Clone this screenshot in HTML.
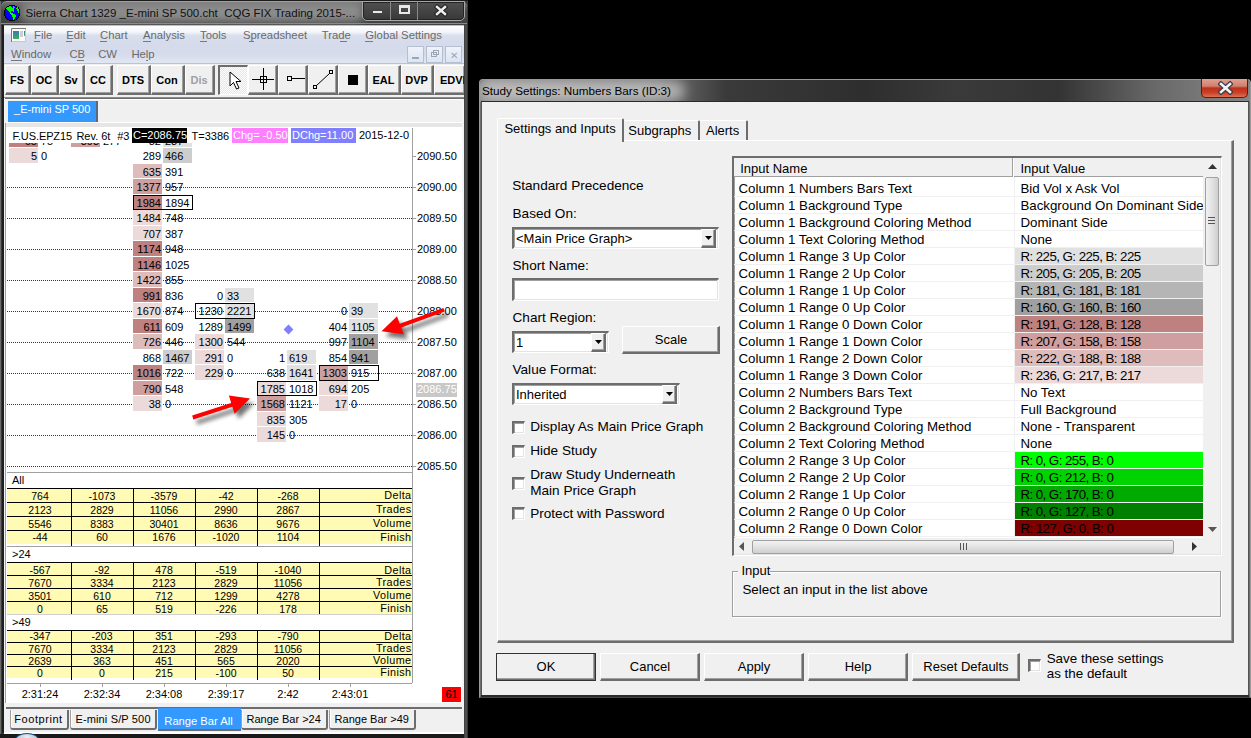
<!DOCTYPE html>
<html><head><meta charset="utf-8"><style>
html,body{margin:0;padding:0}
body{width:1251px;height:738px;background:#000;position:relative;overflow:hidden;font-family:"Liberation Sans",sans-serif;color:#000}
div{position:absolute;box-sizing:border-box}
.t{white-space:pre}
svg{position:absolute}
</style></head><body>

<div style="left:0px;top:0px;width:468px;height:738px;background:#3a3a3a"></div>
<div style="left:0px;top:0px;width:1px;height:738px;background:#6a6a6a"></div>
<div style="left:2px;top:25px;width:2px;height:708px;background:#1e1e1e"></div>
<div style="left:1px;top:1px;width:466px;height:24px;background:linear-gradient(#707070,#4a4a4a 40%,#404040);border-top:1px solid #9a9a9a;border-radius:6px 6px 0 0"></div>
<div style="left:20px;top:4px;width:345px;height:18px;background:rgba(200,200,200,0.55);filter:blur(5px);border-radius:9px"></div>
<svg style="left:4px;top:5px" width="16" height="16" viewBox="0 0 16 16" shape-rendering="crispEdges"><rect x="5" y="0" width="6" height="1" fill="#000"/><rect x="3" y="1" width="2" height="1" fill="#000"/><rect x="5" y="1" width="2" height="1" fill="#00ff00"/><rect x="7" y="1" width="2" height="1" fill="#0000ff"/><rect x="9" y="1" width="1" height="1" fill="#00ff00"/><rect x="10" y="1" width="1" height="1" fill="#0000ff"/><rect x="11" y="1" width="2" height="1" fill="#000"/><rect x="2" y="2" width="1" height="1" fill="#000"/><rect x="3" y="2" width="5" height="1" fill="#00ff00"/><rect x="8" y="2" width="1" height="1" fill="#0000ff"/><rect x="9" y="2" width="2" height="1" fill="#00ff00"/><rect x="11" y="2" width="2" height="1" fill="#0000ff"/><rect x="13" y="2" width="1" height="1" fill="#00ff00"/><rect x="14" y="2" width="1" height="1" fill="#000"/><rect x="1" y="3" width="1" height="1" fill="#000"/><rect x="2" y="3" width="8" height="1" fill="#00ff00"/><rect x="10" y="3" width="2" height="1" fill="#0000ff"/><rect x="12" y="3" width="2" height="1" fill="#00ff00"/><rect x="14" y="3" width="1" height="1" fill="#000"/><rect x="1" y="4" width="1" height="1" fill="#000"/><rect x="2" y="4" width="1" height="1" fill="#0000ff"/><rect x="3" y="4" width="7" height="1" fill="#00ff00"/><rect x="10" y="4" width="3" height="1" fill="#0000ff"/><rect x="13" y="4" width="2" height="1" fill="#00ff00"/><rect x="15" y="4" width="1" height="1" fill="#000"/><rect x="0" y="5" width="1" height="1" fill="#000"/><rect x="1" y="5" width="3" height="1" fill="#0000ff"/><rect x="4" y="5" width="6" height="1" fill="#00ff00"/><rect x="10" y="5" width="3" height="1" fill="#0000ff"/><rect x="13" y="5" width="2" height="1" fill="#00ff00"/><rect x="15" y="5" width="1" height="1" fill="#000"/><rect x="0" y="6" width="1" height="1" fill="#000"/><rect x="1" y="6" width="4" height="1" fill="#0000ff"/><rect x="5" y="6" width="2" height="1" fill="#00ff00"/><rect x="7" y="6" width="2" height="1" fill="#0000ff"/><rect x="9" y="6" width="1" height="1" fill="#00ff00"/><rect x="10" y="6" width="4" height="1" fill="#0000ff"/><rect x="14" y="6" width="1" height="1" fill="#00ff00"/><rect x="15" y="6" width="1" height="1" fill="#000"/><rect x="0" y="7" width="1" height="1" fill="#000"/><rect x="1" y="7" width="5" height="1" fill="#0000ff"/><rect x="6" y="7" width="1" height="1" fill="#00ff00"/><rect x="7" y="7" width="7" height="1" fill="#0000ff"/><rect x="14" y="7" width="1" height="1" fill="#00ff00"/><rect x="15" y="7" width="1" height="1" fill="#000"/><rect x="0" y="8" width="1" height="1" fill="#000"/><rect x="1" y="8" width="5" height="1" fill="#0000ff"/><rect x="6" y="8" width="3" height="1" fill="#00ff00"/><rect x="9" y="8" width="6" height="1" fill="#0000ff"/><rect x="15" y="8" width="1" height="1" fill="#000"/><rect x="0" y="9" width="1" height="1" fill="#000"/><rect x="1" y="9" width="6" height="1" fill="#0000ff"/><rect x="7" y="9" width="4" height="1" fill="#00ff00"/><rect x="11" y="9" width="4" height="1" fill="#0000ff"/><rect x="15" y="9" width="1" height="1" fill="#000"/><rect x="0" y="10" width="1" height="1" fill="#000"/><rect x="1" y="10" width="7" height="1" fill="#0000ff"/><rect x="8" y="10" width="4" height="1" fill="#00ff00"/><rect x="12" y="10" width="3" height="1" fill="#0000ff"/><rect x="15" y="10" width="1" height="1" fill="#000"/><rect x="1" y="11" width="1" height="1" fill="#000"/><rect x="2" y="11" width="6" height="1" fill="#0000ff"/><rect x="8" y="11" width="4" height="1" fill="#00ff00"/><rect x="12" y="11" width="2" height="1" fill="#0000ff"/><rect x="14" y="11" width="1" height="1" fill="#000"/><rect x="1" y="12" width="1" height="1" fill="#000"/><rect x="2" y="12" width="7" height="1" fill="#0000ff"/><rect x="9" y="12" width="2" height="1" fill="#00ff00"/><rect x="11" y="12" width="3" height="1" fill="#0000ff"/><rect x="14" y="12" width="1" height="1" fill="#000"/><rect x="2" y="13" width="1" height="1" fill="#000"/><rect x="3" y="13" width="6" height="1" fill="#0000ff"/><rect x="9" y="13" width="2" height="1" fill="#00ff00"/><rect x="11" y="13" width="2" height="1" fill="#0000ff"/><rect x="13" y="13" width="1" height="1" fill="#000"/><rect x="3" y="14" width="2" height="1" fill="#000"/><rect x="5" y="14" width="4" height="1" fill="#0000ff"/><rect x="9" y="14" width="1" height="1" fill="#00ff00"/><rect x="10" y="14" width="2" height="1" fill="#0000ff"/><rect x="12" y="14" width="1" height="1" fill="#000"/><rect x="5" y="15" width="6" height="1" fill="#000"/></svg>
<div class="t " style="left:25.6px;top:7.87px;font-size:11.5px;line-height:11.5px;color:#111">Sierra Chart 1329 _E-mini SP 500.cht  CQG FIX Trading 2015-...</div>
<div style="left:1px;top:23px;width:466px;height:1px;background:#8a8a8a"></div>
<div style="left:0px;top:0px;width:468px;height:1px;background:#1a1a1a"></div>
<div style="left:362px;top:1px;width:103px;height:20px;border:1px solid #a8a8a8;border-radius:0 0 5px 5px;background:linear-gradient(#505050,#383838);box-shadow:inset 0 0 0 1px #222"></div>
<div style="left:390px;top:1px;width:1px;height:19px;background:#8a8a8a"></div>
<div style="left:417px;top:1px;width:1px;height:19px;background:#8a8a8a"></div>
<div style="left:372px;top:10px;width:11px;height:4px;background:#e8e8e8;border:1px solid #444"></div>
<div style="left:399px;top:5px;width:11px;height:9px;border:2px solid #e8e8e8;border-top-width:3px"></div>
<svg style="left:434px;top:4px" width="14" height="13" viewBox="0 0 14 13"><path d="M3 3 L11 10 M11 3 L3 10" stroke="#222" stroke-width="4.4" stroke-linecap="square"/><path d="M3 3 L11 10 M11 3 L3 10" stroke="#f0f0f0" stroke-width="2.4" stroke-linecap="square"/></svg>
<div style="left:4px;top:25px;width:460px;height:39px;background:linear-gradient(#ffffff 0,#f3f5fa 18%,#d9dfed 27%,#d5dbea 45%,#d5dbea 75%,#dde2f0 88%,#e1e6f3 97%,#b9c2d6 97.5%)"></div>
<div style="left:4px;top:25px;width:460px;height:1px;background:#b9c1cc"></div>
<svg style="left:11px;top:28px" width="15" height="14" viewBox="0 0 15 14">
<defs><linearGradient id="bg1" x1="0" y1="0" x2="0" y2="1"><stop offset="0" stop-color="#4a70c0"/><stop offset="0.35" stop-color="#3a8a9a"/><stop offset="1" stop-color="#40b050"/></linearGradient></defs>
<rect x="0" y="0" width="15" height="14" fill="#fbfbfb"/>
<path d="M0.5 14 V0.5 H15" stroke="#7a7a7a" fill="none"/>
<path d="M14.5 1 V13.5 H1" stroke="#c4c8d2" fill="none"/>
<rect x="2" y="3" width="6" height="8" fill="url(#bg1)"/>
<rect x="9" y="3" width="3" height="6" fill="#cfcfcf"/>
<rect x="13" y="3" width="1" height="5" fill="url(#bg1)"/>
</svg>
<div class="t " style="left:34.1px;top:30.33px;font-size:11.3px;line-height:11.3px;color:#6a6a6a">File</div>
<div class="t " style="left:66.2px;top:30.33px;font-size:11.3px;line-height:11.3px;color:#6a6a6a">Edit</div>
<div class="t " style="left:100.1px;top:30.33px;font-size:11.3px;line-height:11.3px;color:#6a6a6a">Chart</div>
<div class="t " style="left:142.9px;top:30.33px;font-size:11.3px;line-height:11.3px;color:#6a6a6a">Analysis</div>
<div class="t " style="left:200.1px;top:30.33px;font-size:11.3px;line-height:11.3px;color:#6a6a6a">Tools</div>
<div class="t " style="left:243px;top:30.33px;font-size:11.3px;line-height:11.3px;color:#6a6a6a">Spreadsheet</div>
<div class="t " style="left:321.7px;top:30.33px;font-size:11.3px;line-height:11.3px;color:#6a6a6a">Trade</div>
<div class="t " style="left:365.3px;top:30.33px;font-size:11.3px;line-height:11.3px;color:#6a6a6a">Global Settings</div>
<div class="t " style="left:11.1px;top:48.93px;font-size:11.3px;line-height:11.3px;color:#6a6a6a">Window</div>
<div class="t " style="left:69.4px;top:48.93px;font-size:11.3px;line-height:11.3px;color:#6a6a6a">CB</div>
<div class="t " style="left:98.2px;top:48.93px;font-size:11.3px;line-height:11.3px;color:#6a6a6a">CW</div>
<div class="t " style="left:131.4px;top:48.93px;font-size:11.3px;line-height:11.3px;color:#6a6a6a">Help</div>
<div style="left:34.3px;top:41px;width:5.300000000000004px;height:1px;background:#7a7a7a"></div>
<div style="left:66.2px;top:41px;width:5.700000000000003px;height:1px;background:#7a7a7a"></div>
<div style="left:100.4px;top:41px;width:7.0px;height:1px;background:#7a7a7a"></div>
<div style="left:143px;top:41px;width:7.599999999999994px;height:1px;background:#7a7a7a"></div>
<div style="left:200px;top:41px;width:7.199999999999989px;height:1px;background:#7a7a7a"></div>
<div style="left:249.2px;top:41px;width:4.800000000000011px;height:1px;background:#7a7a7a"></div>
<div style="left:340.3px;top:41px;width:6.699999999999989px;height:1px;background:#7a7a7a"></div>
<div style="left:365.3px;top:41px;width:7.699999999999989px;height:1px;background:#7a7a7a"></div>
<div style="left:11.3px;top:60px;width:10.399999999999999px;height:1px;background:#7a7a7a"></div>
<div style="left:77.4px;top:60px;width:6.3999999999999915px;height:1px;background:#7a7a7a"></div>
<div style="left:145.8px;top:60px;width:2.5px;height:1px;background:#7a7a7a"></div>
<div style="left:407px;top:46px;width:17px;height:17px;background:linear-gradient(#eef3fb,#dde5f2);border:1px solid #b4c0d2"></div>
<div style="left:426px;top:46px;width:17px;height:17px;background:linear-gradient(#eef3fb,#dde5f2);border:1px solid #b4c0d2"></div>
<div style="left:445px;top:46px;width:17px;height:17px;background:linear-gradient(#eef3fb,#dde5f2);border:1px solid #b4c0d2"></div>
<div style="left:412px;top:57px;width:7px;height:2px;background:#9aa6b8"></div>
<div style="left:431px;top:52px;width:6px;height:5px;border:1px solid #9aa6b8"></div>
<div style="left:433px;top:50px;width:6px;height:5px;border:1px solid #9aa6b8"></div>
<div class="t " style="left:453.5px;top:50.53px;font-size:10px;line-height:10px;color:#9aa6b8;transform:translateX(-50%)">✕</div>
<div style="left:4px;top:64px;width:460px;height:34px;background:#f0f0f0"></div>
<div style="left:5px;top:65px;width:26px;height:30px;background:#f0f0f0;border-left:1px solid #fff;border-top:1px solid #fff;border-right:2px solid #6d6d6d;border-bottom:2px solid #6d6d6d;box-shadow:inset -1px -1px 0 #a0a0a0"></div>
<div class="t " style="left:-3.0px;width:40px;top:74.69px;font-size:11px;line-height:11px;text-align:center;font-weight:bold;">FS</div>
<div style="left:31px;top:65px;width:28px;height:30px;background:#f0f0f0;border-left:1px solid #fff;border-top:1px solid #fff;border-right:2px solid #6d6d6d;border-bottom:2px solid #6d6d6d;box-shadow:inset -1px -1px 0 #a0a0a0"></div>
<div class="t " style="left:24.0px;width:40px;top:74.69px;font-size:11px;line-height:11px;text-align:center;font-weight:bold;">OC</div>
<div style="left:59px;top:65px;width:26px;height:30px;background:#f0f0f0;border-left:1px solid #fff;border-top:1px solid #fff;border-right:2px solid #6d6d6d;border-bottom:2px solid #6d6d6d;box-shadow:inset -1px -1px 0 #a0a0a0"></div>
<div class="t " style="left:51.0px;width:40px;top:74.69px;font-size:11px;line-height:11px;text-align:center;font-weight:bold;">Sv</div>
<div style="left:85px;top:65px;width:28px;height:30px;background:#f0f0f0;border-left:1px solid #fff;border-top:1px solid #fff;border-right:2px solid #6d6d6d;border-bottom:2px solid #6d6d6d;box-shadow:inset -1px -1px 0 #a0a0a0"></div>
<div class="t " style="left:78.0px;width:40px;top:74.69px;font-size:11px;line-height:11px;text-align:center;font-weight:bold;">CC</div>
<div style="left:117px;top:65px;width:34px;height:30px;background:#f0f0f0;border-left:1px solid #fff;border-top:1px solid #fff;border-right:2px solid #6d6d6d;border-bottom:2px solid #6d6d6d;box-shadow:inset -1px -1px 0 #a0a0a0"></div>
<div class="t " style="left:113.0px;width:40px;top:74.69px;font-size:11px;line-height:11px;text-align:center;font-weight:bold;">DTS</div>
<div style="left:151px;top:65px;width:34px;height:30px;background:#f0f0f0;border-left:1px solid #fff;border-top:1px solid #fff;border-right:2px solid #6d6d6d;border-bottom:2px solid #6d6d6d;box-shadow:inset -1px -1px 0 #a0a0a0"></div>
<div class="t " style="left:147.0px;width:40px;top:74.69px;font-size:11px;line-height:11px;text-align:center;font-weight:bold;">Con</div>
<div style="left:185px;top:65px;width:30px;height:30px;background:#f0f0f0;border-left:1px solid #fff;border-top:1px solid #fff;border-right:2px solid #6d6d6d;border-bottom:2px solid #6d6d6d;box-shadow:inset -1px -1px 0 #a0a0a0"></div>
<div class="t " style="left:179.0px;width:40px;top:74.69px;font-size:11px;line-height:11px;text-align:center;font-weight:bold;color:#a0a0a0">Dis</div>
<div style="left:218px;top:65px;width:30px;height:30px;background:repeating-conic-gradient(#fdfdfd 0 25%,#e6e6e6 0 50%) 0 0/2px 2px;border-left:2px solid #6d6d6d;border-top:2px solid #6d6d6d;border-right:1px solid #fff;border-bottom:1px solid #fff"></div>
<div style="left:248px;top:65px;width:30px;height:30px;background:#f0f0f0;border-left:1px solid #fff;border-top:1px solid #fff;border-right:2px solid #6d6d6d;border-bottom:2px solid #6d6d6d;box-shadow:inset -1px -1px 0 #a0a0a0"></div>
<div style="left:278px;top:65px;width:30px;height:30px;background:#f0f0f0;border-left:1px solid #fff;border-top:1px solid #fff;border-right:2px solid #6d6d6d;border-bottom:2px solid #6d6d6d;box-shadow:inset -1px -1px 0 #a0a0a0"></div>
<div style="left:308px;top:65px;width:30px;height:30px;background:#f0f0f0;border-left:1px solid #fff;border-top:1px solid #fff;border-right:2px solid #6d6d6d;border-bottom:2px solid #6d6d6d;box-shadow:inset -1px -1px 0 #a0a0a0"></div>
<div style="left:338px;top:65px;width:30px;height:30px;background:#f0f0f0;border-left:1px solid #fff;border-top:1px solid #fff;border-right:2px solid #6d6d6d;border-bottom:2px solid #6d6d6d;box-shadow:inset -1px -1px 0 #a0a0a0"></div>
<div style="left:368px;top:65px;width:33px;height:30px;background:#f0f0f0;border-left:1px solid #fff;border-top:1px solid #fff;border-right:2px solid #6d6d6d;border-bottom:2px solid #6d6d6d;box-shadow:inset -1px -1px 0 #a0a0a0"></div>
<div style="left:401px;top:65px;width:33px;height:30px;background:#f0f0f0;border-left:1px solid #fff;border-top:1px solid #fff;border-right:2px solid #6d6d6d;border-bottom:2px solid #6d6d6d;box-shadow:inset -1px -1px 0 #a0a0a0"></div>
<div style="left:434px;top:65px;width:32px;height:30px;background:#f0f0f0;border-left:1px solid #fff;border-top:1px solid #fff;border-right:2px solid #6d6d6d;border-bottom:2px solid #6d6d6d;box-shadow:inset -1px -1px 0 #a0a0a0"></div>
<div class="t " style="left:363.5px;width:40px;top:74.69px;font-size:11px;line-height:11px;text-align:center;font-weight:bold">EAL</div>
<div class="t " style="left:396.5px;width:40px;top:74.69px;font-size:11px;line-height:11px;text-align:center;font-weight:bold">DVP</div>
<div class="t " style="left:440px;top:74.69px;font-size:11px;line-height:11px;font-weight:bold">EDVP</div>
<svg style="left:229px;top:71px" width="14" height="20" viewBox="0 0 14 20">
<path d="M1 1 L1 15 L4.5 11.5 L7.5 18 L10 17 L7 10.5 L12 10.5 Z" fill="#fff" stroke="#000" stroke-width="1"/>
</svg>
<svg style="left:250px;top:66px" width="26" height="26" viewBox="0 0 26 26">
<path d="M2 13.5 H24 M13.5 2 V24" stroke="#000" stroke-width="1"/>
<rect x="10.5" y="10.5" width="6" height="6" fill="none" stroke="#000"/>
</svg>
<svg style="left:280px;top:66px" width="26" height="26" viewBox="0 0 26 26">
<rect x="7.5" y="10.5" width="4" height="4" fill="none" stroke="#000"/><path d="M11.5 12.5 H25" stroke="#000"/>
</svg>
<svg style="left:310px;top:66px" width="26" height="26" viewBox="0 0 26 26">
<rect x="3.5" y="19.5" width="3" height="3" fill="none" stroke="#000"/><rect x="19.5" y="4.5" width="3" height="3" fill="none" stroke="#000"/><path d="M6.5 19.5 L19.5 7.5" stroke="#000"/>
</svg>
<div style="left:348px;top:75px;width:10px;height:10px;background:#000"></div>
<div style="left:4px;top:95px;width:460px;height:2px;background:#f0f0f0"></div>
<div style="left:4px;top:97px;width:460px;height:2px;background:linear-gradient(#8a8a8a 0 1px,#6d6d6d 1px 2px)"></div>
<div style="left:4px;top:99px;width:460px;height:29px;background:#f0f0f0"></div>
<div style="left:5px;top:99px;width:458px;height:1px;background:#fff"></div>
<div style="left:8px;top:101px;width:90px;height:21px;background:#3399ff;border-right:2px solid #5a6a7a"></div>
<div class="t " style="left:14.1px;top:103.99px;font-size:11px;line-height:11px;color:#fff">_E-mini SP 500</div>
<div style="left:6px;top:122px;width:456px;height:5px;background:#e6e6e6;border-top:1px solid #fff"></div>
<div style="left:6px;top:127px;width:456px;height:576px;background:#fff"></div>
<div style="left:4px;top:98px;width:1px;height:635px;background:#f4f4f4"></div>
<div style="left:5px;top:123px;width:1px;height:585px;background:#a0a0a0"></div>
<div style="left:7px;top:187px;width:405px;height:1px;background:repeating-linear-gradient(90deg,#333 0 1px,transparent 1px 2px)"></div>
<div style="left:7px;top:218px;width:405px;height:1px;background:repeating-linear-gradient(90deg,#333 0 1px,transparent 1px 2px)"></div>
<div style="left:7px;top:249px;width:405px;height:1px;background:repeating-linear-gradient(90deg,#333 0 1px,transparent 1px 2px)"></div>
<div style="left:7px;top:280px;width:405px;height:1px;background:repeating-linear-gradient(90deg,#333 0 1px,transparent 1px 2px)"></div>
<div style="left:7px;top:311px;width:405px;height:1px;background:repeating-linear-gradient(90deg,#333 0 1px,transparent 1px 2px)"></div>
<div style="left:7px;top:342px;width:405px;height:1px;background:repeating-linear-gradient(90deg,#333 0 1px,transparent 1px 2px)"></div>
<div style="left:7px;top:373px;width:405px;height:1px;background:repeating-linear-gradient(90deg,#333 0 1px,transparent 1px 2px)"></div>
<div style="left:7px;top:404px;width:405px;height:1px;background:repeating-linear-gradient(90deg,#333 0 1px,transparent 1px 2px)"></div>
<div style="left:7px;top:435px;width:405px;height:1px;background:repeating-linear-gradient(90deg,#333 0 1px,transparent 1px 2px)"></div>
<div style="left:7px;top:466px;width:405px;height:1px;background:repeating-linear-gradient(90deg,#333 0 1px,transparent 1px 2px)"></div>
<div style="left:9px;top:133px;width:29px;height:14px;background:rgb(191,128,128)"></div>
<div class="t " style="right:1214px;top:135.69px;font-size:11px;line-height:11px;text-align:right;">65</div>
<div class="t " style="left:41px;top:135.69px;font-size:11px;line-height:11px;">75</div>
<div style="left:9px;top:148px;width:29px;height:15px;background:rgb(236,217,217)"></div>
<div class="t " style="right:1214px;top:150.69px;font-size:11px;line-height:11px;text-align:right;">5</div>
<div class="t " style="left:41px;top:150.69px;font-size:11px;line-height:11px;">0</div>
<div style="left:71px;top:133px;width:29px;height:14px;background:rgb(207,158,158)"></div>
<div class="t " style="right:1152px;top:135.69px;font-size:11px;line-height:11px;text-align:right;">393</div>
<div class="t " style="left:103px;top:135.69px;font-size:11px;line-height:11px;">277</div>
<div style="left:163px;top:133px;width:29px;height:14px;background:rgb(225,225,225)"></div>
<div class="t " style="right:1090px;top:135.69px;font-size:11px;line-height:11px;text-align:right;">82</div>
<div class="t " style="left:165px;top:135.69px;font-size:11px;line-height:11px;">237</div>
<div style="left:163px;top:148px;width:29px;height:15px;background:rgb(205,205,205)"></div>
<div class="t " style="right:1090px;top:150.69px;font-size:11px;line-height:11px;text-align:right;">289</div>
<div class="t " style="left:165px;top:150.69px;font-size:11px;line-height:11px;">466</div>
<div style="left:133px;top:164px;width:29px;height:14px;background:rgb(222,188,188)"></div>
<div class="t " style="right:1090px;top:166.69px;font-size:11px;line-height:11px;text-align:right;">635</div>
<div class="t " style="left:165px;top:166.69px;font-size:11px;line-height:11px;">391</div>
<div style="left:133px;top:179px;width:29px;height:15px;background:rgb(207,158,158)"></div>
<div class="t " style="right:1090px;top:181.69px;font-size:11px;line-height:11px;text-align:right;">1377</div>
<div class="t " style="left:165px;top:181.69px;font-size:11px;line-height:11px;">957</div>
<div style="left:133px;top:195px;width:29px;height:14px;background:rgb(191,128,128)"></div>
<div style="left:133px;top:195px;width:60px;height:15px;border:1px solid #000"></div>
<div class="t " style="right:1090px;top:197.69px;font-size:11px;line-height:11px;text-align:right;">1984</div>
<div class="t " style="left:165px;top:197.69px;font-size:11px;line-height:11px;">1894</div>
<div style="left:133px;top:210px;width:29px;height:15px;background:rgb(236,217,217)"></div>
<div class="t " style="right:1090px;top:212.69px;font-size:11px;line-height:11px;text-align:right;">1484</div>
<div class="t " style="left:165px;top:212.69px;font-size:11px;line-height:11px;">748</div>
<div style="left:133px;top:226px;width:29px;height:14px;background:rgb(236,217,217)"></div>
<div class="t " style="right:1090px;top:228.69px;font-size:11px;line-height:11px;text-align:right;">707</div>
<div class="t " style="left:165px;top:228.69px;font-size:11px;line-height:11px;">387</div>
<div style="left:133px;top:241px;width:29px;height:15px;background:rgb(191,128,128)"></div>
<div class="t " style="right:1090px;top:243.69px;font-size:11px;line-height:11px;text-align:right;">1174</div>
<div class="t " style="left:165px;top:243.69px;font-size:11px;line-height:11px;">948</div>
<div style="left:133px;top:257px;width:29px;height:14px;background:rgb(191,128,128)"></div>
<div class="t " style="right:1090px;top:259.69px;font-size:11px;line-height:11px;text-align:right;">1146</div>
<div class="t " style="left:165px;top:259.69px;font-size:11px;line-height:11px;">1025</div>
<div style="left:133px;top:272px;width:29px;height:15px;background:rgb(222,188,188)"></div>
<div class="t " style="right:1090px;top:274.69px;font-size:11px;line-height:11px;text-align:right;">1422</div>
<div class="t " style="left:165px;top:274.69px;font-size:11px;line-height:11px;">855</div>
<div style="left:133px;top:288px;width:29px;height:14px;background:rgb(191,128,128)"></div>
<div class="t " style="right:1090px;top:290.69px;font-size:11px;line-height:11px;text-align:right;">991</div>
<div class="t " style="left:165px;top:290.69px;font-size:11px;line-height:11px;">836</div>
<div style="left:133px;top:303px;width:29px;height:15px;background:rgb(236,217,217)"></div>
<div class="t " style="right:1090px;top:305.69px;font-size:11px;line-height:11px;text-align:right;">1670</div>
<div class="t " style="left:165px;top:305.69px;font-size:11px;line-height:11px;">874</div>
<div style="left:133px;top:319px;width:29px;height:14px;background:rgb(191,128,128)"></div>
<div class="t " style="right:1090px;top:321.69px;font-size:11px;line-height:11px;text-align:right;">611</div>
<div class="t " style="left:165px;top:321.69px;font-size:11px;line-height:11px;">609</div>
<div style="left:133px;top:334px;width:29px;height:15px;background:rgb(222,188,188)"></div>
<div class="t " style="right:1090px;top:336.69px;font-size:11px;line-height:11px;text-align:right;">726</div>
<div class="t " style="left:165px;top:336.69px;font-size:11px;line-height:11px;">446</div>
<div style="left:163px;top:350px;width:29px;height:14px;background:rgb(205,205,205)"></div>
<div class="t " style="right:1090px;top:352.69px;font-size:11px;line-height:11px;text-align:right;">868</div>
<div class="t " style="left:165px;top:352.69px;font-size:11px;line-height:11px;">1467</div>
<div style="left:133px;top:365px;width:29px;height:15px;background:rgb(191,128,128)"></div>
<div class="t " style="right:1090px;top:367.69px;font-size:11px;line-height:11px;text-align:right;">1016</div>
<div class="t " style="left:165px;top:367.69px;font-size:11px;line-height:11px;">722</div>
<div style="left:133px;top:381px;width:29px;height:14px;background:rgb(207,158,158)"></div>
<div class="t " style="right:1090px;top:383.69px;font-size:11px;line-height:11px;text-align:right;">790</div>
<div class="t " style="left:165px;top:383.69px;font-size:11px;line-height:11px;">548</div>
<div style="left:133px;top:396px;width:29px;height:15px;background:rgb(236,217,217)"></div>
<div class="t " style="right:1090px;top:398.69px;font-size:11px;line-height:11px;text-align:right;">38</div>
<div class="t " style="left:165px;top:398.69px;font-size:11px;line-height:11px;">0</div>
<div style="left:225px;top:288px;width:29px;height:14px;background:rgb(225,225,225)"></div>
<div class="t " style="right:1028px;top:290.69px;font-size:11px;line-height:11px;text-align:right;">0</div>
<div class="t " style="left:227px;top:290.69px;font-size:11px;line-height:11px;">33</div>
<div style="left:225px;top:303px;width:29px;height:15px;background:rgb(225,225,225)"></div>
<div style="left:195px;top:303px;width:60px;height:16px;border:1px solid #000"></div>
<div class="t " style="right:1028px;top:305.69px;font-size:11px;line-height:11px;text-align:right;">1230</div>
<div class="t " style="left:227px;top:305.69px;font-size:11px;line-height:11px;">2221</div>
<div style="left:225px;top:319px;width:29px;height:14px;background:rgb(160,160,160)"></div>
<div class="t " style="right:1028px;top:321.69px;font-size:11px;line-height:11px;text-align:right;">1289</div>
<div class="t " style="left:227px;top:321.69px;font-size:11px;line-height:11px;">1499</div>
<div style="left:195px;top:334px;width:29px;height:15px;background:rgb(236,217,217)"></div>
<div class="t " style="right:1028px;top:336.69px;font-size:11px;line-height:11px;text-align:right;">1300</div>
<div class="t " style="left:227px;top:336.69px;font-size:11px;line-height:11px;">544</div>
<div style="left:195px;top:350px;width:29px;height:14px;background:rgb(236,217,217)"></div>
<div class="t " style="right:1028px;top:352.69px;font-size:11px;line-height:11px;text-align:right;">291</div>
<div class="t " style="left:227px;top:352.69px;font-size:11px;line-height:11px;">0</div>
<div style="left:195px;top:365px;width:29px;height:15px;background:rgb(236,217,217)"></div>
<div class="t " style="right:1028px;top:367.69px;font-size:11px;line-height:11px;text-align:right;">229</div>
<div class="t " style="left:227px;top:367.69px;font-size:11px;line-height:11px;">0</div>
<div style="left:287px;top:350px;width:29px;height:14px;background:rgb(225,225,225)"></div>
<div class="t " style="right:966px;top:352.69px;font-size:11px;line-height:11px;text-align:right;">1</div>
<div class="t " style="left:289px;top:352.69px;font-size:11px;line-height:11px;">619</div>
<div style="left:287px;top:365px;width:29px;height:15px;background:rgb(225,225,225)"></div>
<div class="t " style="right:966px;top:367.69px;font-size:11px;line-height:11px;text-align:right;">638</div>
<div class="t " style="left:289px;top:367.69px;font-size:11px;line-height:11px;">1641</div>
<div style="left:257px;top:381px;width:29px;height:14px;background:rgb(236,217,217)"></div>
<div style="left:257px;top:381px;width:60px;height:15px;border:1px solid #000"></div>
<div class="t " style="right:966px;top:383.69px;font-size:11px;line-height:11px;text-align:right;">1785</div>
<div class="t " style="left:289px;top:383.69px;font-size:11px;line-height:11px;">1018</div>
<div style="left:257px;top:396px;width:29px;height:15px;background:rgb(207,158,158)"></div>
<div class="t " style="right:966px;top:398.69px;font-size:11px;line-height:11px;text-align:right;">1568</div>
<div class="t " style="left:289px;top:398.69px;font-size:11px;line-height:11px;">1121</div>
<div style="left:257px;top:412px;width:29px;height:14px;background:rgb(236,217,217)"></div>
<div class="t " style="right:966px;top:414.69px;font-size:11px;line-height:11px;text-align:right;">835</div>
<div class="t " style="left:289px;top:414.69px;font-size:11px;line-height:11px;">305</div>
<div style="left:257px;top:427px;width:29px;height:15px;background:rgb(236,217,217)"></div>
<div class="t " style="right:966px;top:429.69px;font-size:11px;line-height:11px;text-align:right;">145</div>
<div class="t " style="left:289px;top:429.69px;font-size:11px;line-height:11px;">0</div>
<div style="left:349px;top:303px;width:29px;height:15px;background:rgb(225,225,225)"></div>
<div class="t " style="right:904px;top:305.69px;font-size:11px;line-height:11px;text-align:right;">0</div>
<div class="t " style="left:351px;top:305.69px;font-size:11px;line-height:11px;">39</div>
<div style="left:349px;top:319px;width:29px;height:14px;background:rgb(225,225,225)"></div>
<div class="t " style="right:904px;top:321.69px;font-size:11px;line-height:11px;text-align:right;">404</div>
<div class="t " style="left:351px;top:321.69px;font-size:11px;line-height:11px;">1105</div>
<div style="left:349px;top:334px;width:29px;height:15px;background:rgb(160,160,160)"></div>
<div class="t " style="right:904px;top:336.69px;font-size:11px;line-height:11px;text-align:right;">997</div>
<div class="t " style="left:351px;top:336.69px;font-size:11px;line-height:11px;">1104</div>
<div style="left:349px;top:350px;width:29px;height:14px;background:rgb(160,160,160)"></div>
<div class="t " style="right:904px;top:352.69px;font-size:11px;line-height:11px;text-align:right;">854</div>
<div class="t " style="left:351px;top:352.69px;font-size:11px;line-height:11px;">941</div>
<div style="left:319px;top:365px;width:29px;height:15px;background:rgb(207,158,158)"></div>
<div style="left:319px;top:365px;width:60px;height:16px;border:1px solid #000"></div>
<div class="t " style="right:904px;top:367.69px;font-size:11px;line-height:11px;text-align:right;">1303</div>
<div class="t " style="left:351px;top:367.69px;font-size:11px;line-height:11px;">915</div>
<div style="left:319px;top:381px;width:29px;height:14px;background:rgb(236,217,217)"></div>
<div class="t " style="right:904px;top:383.69px;font-size:11px;line-height:11px;text-align:right;">694</div>
<div class="t " style="left:351px;top:383.69px;font-size:11px;line-height:11px;">205</div>
<div style="left:319px;top:396px;width:29px;height:15px;background:rgb(236,217,217)"></div>
<div class="t " style="right:904px;top:398.69px;font-size:11px;line-height:11px;text-align:right;">17</div>
<div class="t " style="left:351px;top:398.69px;font-size:11px;line-height:11px;">0</div>
<div style="left:7px;top:128px;width:405px;height:15px;background:#fff"></div>
<div class="t " style="left:12.5px;top:130.69px;font-size:11px;line-height:11px;letter-spacing:-0.1px">F.US.EPZ15</div>
<div class="t " style="left:76.4px;top:130.69px;font-size:11px;line-height:11px;">Rev. 6t</div>
<div class="t " style="left:117.2px;top:130.69px;font-size:11px;line-height:11px;">#3</div>
<div style="left:132px;top:128px;width:55px;height:15px;background:#000;overflow:hidden"><div class="t" style="left:1px;top:1.5px;font-size:11px;line-height:11px;color:#fff">C=2086.75</div></div>
<div class="t " style="left:191.5px;top:130.69px;font-size:11px;line-height:11px;">T=3386</div>
<div style="left:232px;top:128px;width:56px;height:15px;background:rgb(255,128,255);overflow:hidden"><div class="t" style="left:1px;top:1.5px;font-size:11px;line-height:11px;color:#fff">Chg= -0.50</div></div>
<div style="left:291px;top:128px;width:65px;height:15px;background:rgb(128,128,255);overflow:hidden"><div class="t" style="left:1px;top:1.5px;font-size:11px;line-height:11px;color:#fff">DChg=11.00</div></div>
<div style="left:359px;top:128px;width:53px;height:15px;overflow:hidden"><div class="t" style="left:0;top:1.5px;font-size:11px;line-height:11px">2015-12-0</div></div>
<div style="left:412px;top:128px;width:1px;height:555px;background:#a0a0a0"></div>
<div style="left:412px;top:156px;width:4px;height:1px;background:#a0a0a0"></div>
<div class="t " style="left:417px;top:151.19px;font-size:11px;line-height:11px;">2090.50</div>
<div style="left:412px;top:187px;width:4px;height:1px;background:#a0a0a0"></div>
<div class="t " style="left:417px;top:182.19px;font-size:11px;line-height:11px;">2090.00</div>
<div style="left:412px;top:218px;width:4px;height:1px;background:#a0a0a0"></div>
<div class="t " style="left:417px;top:213.19px;font-size:11px;line-height:11px;">2089.50</div>
<div style="left:412px;top:249px;width:4px;height:1px;background:#a0a0a0"></div>
<div class="t " style="left:417px;top:244.19px;font-size:11px;line-height:11px;">2089.00</div>
<div style="left:412px;top:280px;width:4px;height:1px;background:#a0a0a0"></div>
<div class="t " style="left:417px;top:275.19px;font-size:11px;line-height:11px;">2088.50</div>
<div style="left:412px;top:311px;width:4px;height:1px;background:#a0a0a0"></div>
<div class="t " style="left:417px;top:306.19px;font-size:11px;line-height:11px;">2088.00</div>
<div style="left:412px;top:342px;width:4px;height:1px;background:#a0a0a0"></div>
<div class="t " style="left:417px;top:337.19px;font-size:11px;line-height:11px;">2087.50</div>
<div style="left:412px;top:373px;width:4px;height:1px;background:#a0a0a0"></div>
<div class="t " style="left:417px;top:368.19px;font-size:11px;line-height:11px;">2087.00</div>
<div style="left:412px;top:404px;width:4px;height:1px;background:#a0a0a0"></div>
<div class="t " style="left:417px;top:399.19px;font-size:11px;line-height:11px;">2086.50</div>
<div style="left:412px;top:435px;width:4px;height:1px;background:#a0a0a0"></div>
<div class="t " style="left:417px;top:430.19px;font-size:11px;line-height:11px;">2086.00</div>
<div style="left:412px;top:466px;width:4px;height:1px;background:#a0a0a0"></div>
<div class="t " style="left:417px;top:461.19px;font-size:11px;line-height:11px;">2085.50</div>
<div style="left:416px;top:382.5px;width:41px;height:14px;background:#c8c8c8"></div>
<div class="t " style="left:417px;top:384.19px;font-size:11px;line-height:11px;color:#fff">2086.75</div>
<div style="left:284.5px;top:325.5px;width:7px;height:7px;background:#8080ff;transform:rotate(45deg)"></div>
<div style="left:7px;top:472px;width:405px;height:1px;background:#a0a0a0"></div>
<div class="t " style="left:12px;top:475.39px;font-size:11px;line-height:11px;">All</div>
<div style="left:7px;top:488px;width:405px;height:56px;background:rgb(255,250,180)"></div>
<div style="left:7px;top:488px;width:405px;height:1px;background:#000"></div>
<div style="left:7px;top:502px;width:405px;height:1px;background:#000"></div>
<div style="left:7px;top:516px;width:405px;height:1px;background:#000"></div>
<div style="left:7px;top:530px;width:405px;height:1px;background:#000"></div>
<div style="left:71px;top:488px;width:1px;height:58px;background:#000"></div>
<div style="left:133px;top:488px;width:1px;height:58px;background:#000"></div>
<div style="left:195px;top:488px;width:1px;height:58px;background:#000"></div>
<div style="left:257px;top:488px;width:1px;height:58px;background:#000"></div>
<div style="left:319px;top:488px;width:1px;height:58px;background:#000"></div>
<div class="t " style="left:10.0px;width:60px;top:490.61px;font-size:10.5px;line-height:10.5px;text-align:center;">764</div>
<div class="t " style="left:72.0px;width:60px;top:490.61px;font-size:10.5px;line-height:10.5px;text-align:center;">-1073</div>
<div class="t " style="left:134.0px;width:60px;top:490.61px;font-size:10.5px;line-height:10.5px;text-align:center;">-3579</div>
<div class="t " style="left:196.0px;width:60px;top:490.61px;font-size:10.5px;line-height:10.5px;text-align:center;">-42</div>
<div class="t " style="left:258.0px;width:60px;top:490.61px;font-size:10.5px;line-height:10.5px;text-align:center;">-268</div>
<div class="t " style="right:839.5px;top:490.36px;font-size:10.8px;line-height:10.8px;text-align:right;letter-spacing:0.4px">Delta</div>
<div class="t " style="left:10.0px;width:60px;top:504.51px;font-size:10.5px;line-height:10.5px;text-align:center;">2123</div>
<div class="t " style="left:72.0px;width:60px;top:504.51px;font-size:10.5px;line-height:10.5px;text-align:center;">2829</div>
<div class="t " style="left:134.0px;width:60px;top:504.51px;font-size:10.5px;line-height:10.5px;text-align:center;">11056</div>
<div class="t " style="left:196.0px;width:60px;top:504.51px;font-size:10.5px;line-height:10.5px;text-align:center;">2990</div>
<div class="t " style="left:258.0px;width:60px;top:504.51px;font-size:10.5px;line-height:10.5px;text-align:center;">2867</div>
<div class="t " style="right:839.5px;top:504.26px;font-size:10.8px;line-height:10.8px;text-align:right;letter-spacing:0.4px">Trades</div>
<div class="t " style="left:10.0px;width:60px;top:518.51px;font-size:10.5px;line-height:10.5px;text-align:center;">5546</div>
<div class="t " style="left:72.0px;width:60px;top:518.51px;font-size:10.5px;line-height:10.5px;text-align:center;">8383</div>
<div class="t " style="left:134.0px;width:60px;top:518.51px;font-size:10.5px;line-height:10.5px;text-align:center;">30401</div>
<div class="t " style="left:196.0px;width:60px;top:518.51px;font-size:10.5px;line-height:10.5px;text-align:center;">8636</div>
<div class="t " style="left:258.0px;width:60px;top:518.51px;font-size:10.5px;line-height:10.5px;text-align:center;">9676</div>
<div class="t " style="right:839.5px;top:518.26px;font-size:10.8px;line-height:10.8px;text-align:right;letter-spacing:0.4px">Volume</div>
<div class="t " style="left:10.0px;width:60px;top:532.31px;font-size:10.5px;line-height:10.5px;text-align:center;">-44</div>
<div class="t " style="left:72.0px;width:60px;top:532.31px;font-size:10.5px;line-height:10.5px;text-align:center;">60</div>
<div class="t " style="left:134.0px;width:60px;top:532.31px;font-size:10.5px;line-height:10.5px;text-align:center;">1676</div>
<div class="t " style="left:196.0px;width:60px;top:532.31px;font-size:10.5px;line-height:10.5px;text-align:center;">-1020</div>
<div class="t " style="left:258.0px;width:60px;top:532.31px;font-size:10.5px;line-height:10.5px;text-align:center;">1104</div>
<div class="t " style="right:839.5px;top:532.06px;font-size:10.8px;line-height:10.8px;text-align:right;letter-spacing:0.4px">Finish</div>
<div style="left:7px;top:546px;width:405px;height:1px;background:#a0a0a0"></div>
<div class="t " style="left:12px;top:549.09px;font-size:11px;line-height:11px;">&gt;24</div>
<div style="left:7px;top:562px;width:405px;height:52px;background:rgb(255,250,180)"></div>
<div style="left:7px;top:562px;width:405px;height:1px;background:#000"></div>
<div style="left:7px;top:575px;width:405px;height:1px;background:#000"></div>
<div style="left:7px;top:588px;width:405px;height:1px;background:#000"></div>
<div style="left:7px;top:601px;width:405px;height:1px;background:#000"></div>
<div style="left:71px;top:562px;width:1px;height:53px;background:#000"></div>
<div style="left:133px;top:562px;width:1px;height:53px;background:#000"></div>
<div style="left:195px;top:562px;width:1px;height:53px;background:#000"></div>
<div style="left:257px;top:562px;width:1px;height:53px;background:#000"></div>
<div style="left:319px;top:562px;width:1px;height:53px;background:#000"></div>
<div class="t " style="left:10.0px;width:60px;top:564.91px;font-size:10.5px;line-height:10.5px;text-align:center;">-567</div>
<div class="t " style="left:72.0px;width:60px;top:564.91px;font-size:10.5px;line-height:10.5px;text-align:center;">-92</div>
<div class="t " style="left:134.0px;width:60px;top:564.91px;font-size:10.5px;line-height:10.5px;text-align:center;">478</div>
<div class="t " style="left:196.0px;width:60px;top:564.91px;font-size:10.5px;line-height:10.5px;text-align:center;">-519</div>
<div class="t " style="left:258.0px;width:60px;top:564.91px;font-size:10.5px;line-height:10.5px;text-align:center;">-1040</div>
<div class="t " style="right:839.5px;top:564.66px;font-size:10.8px;line-height:10.8px;text-align:right;letter-spacing:0.4px">Delta</div>
<div class="t " style="left:10.0px;width:60px;top:577.71px;font-size:10.5px;line-height:10.5px;text-align:center;">7670</div>
<div class="t " style="left:72.0px;width:60px;top:577.71px;font-size:10.5px;line-height:10.5px;text-align:center;">3334</div>
<div class="t " style="left:134.0px;width:60px;top:577.71px;font-size:10.5px;line-height:10.5px;text-align:center;">2123</div>
<div class="t " style="left:196.0px;width:60px;top:577.71px;font-size:10.5px;line-height:10.5px;text-align:center;">2829</div>
<div class="t " style="left:258.0px;width:60px;top:577.71px;font-size:10.5px;line-height:10.5px;text-align:center;">11056</div>
<div class="t " style="right:839.5px;top:577.46px;font-size:10.8px;line-height:10.8px;text-align:right;letter-spacing:0.4px">Trades</div>
<div class="t " style="left:10.0px;width:60px;top:590.71px;font-size:10.5px;line-height:10.5px;text-align:center;">3501</div>
<div class="t " style="left:72.0px;width:60px;top:590.71px;font-size:10.5px;line-height:10.5px;text-align:center;">610</div>
<div class="t " style="left:134.0px;width:60px;top:590.71px;font-size:10.5px;line-height:10.5px;text-align:center;">712</div>
<div class="t " style="left:196.0px;width:60px;top:590.71px;font-size:10.5px;line-height:10.5px;text-align:center;">1299</div>
<div class="t " style="left:258.0px;width:60px;top:590.71px;font-size:10.5px;line-height:10.5px;text-align:center;">4278</div>
<div class="t " style="right:839.5px;top:590.46px;font-size:10.8px;line-height:10.8px;text-align:right;letter-spacing:0.4px">Volume</div>
<div class="t " style="left:10.0px;width:60px;top:603.51px;font-size:10.5px;line-height:10.5px;text-align:center;">0</div>
<div class="t " style="left:72.0px;width:60px;top:603.51px;font-size:10.5px;line-height:10.5px;text-align:center;">65</div>
<div class="t " style="left:134.0px;width:60px;top:603.51px;font-size:10.5px;line-height:10.5px;text-align:center;">519</div>
<div class="t " style="left:196.0px;width:60px;top:603.51px;font-size:10.5px;line-height:10.5px;text-align:center;">-226</div>
<div class="t " style="left:258.0px;width:60px;top:603.51px;font-size:10.5px;line-height:10.5px;text-align:center;">178</div>
<div class="t " style="right:839.5px;top:603.26px;font-size:10.8px;line-height:10.8px;text-align:right;letter-spacing:0.4px">Finish</div>
<div style="left:7px;top:614px;width:405px;height:1px;background:#d0d0d0"></div>
<div class="t " style="left:12px;top:616.89px;font-size:11px;line-height:11px;">&gt;49</div>
<div style="left:7px;top:630px;width:405px;height:48px;background:rgb(255,250,180)"></div>
<div style="left:7px;top:630px;width:405px;height:1px;background:#000"></div>
<div style="left:7px;top:642px;width:405px;height:1px;background:#000"></div>
<div style="left:7px;top:654px;width:405px;height:1px;background:#000"></div>
<div style="left:7px;top:666px;width:405px;height:1px;background:#000"></div>
<div style="left:71px;top:630px;width:1px;height:50px;background:#000"></div>
<div style="left:133px;top:630px;width:1px;height:50px;background:#000"></div>
<div style="left:195px;top:630px;width:1px;height:50px;background:#000"></div>
<div style="left:257px;top:630px;width:1px;height:50px;background:#000"></div>
<div style="left:319px;top:630px;width:1px;height:50px;background:#000"></div>
<div class="t " style="left:10.0px;width:60px;top:631.41px;font-size:10.5px;line-height:10.5px;text-align:center;">-347</div>
<div class="t " style="left:72.0px;width:60px;top:631.41px;font-size:10.5px;line-height:10.5px;text-align:center;">-203</div>
<div class="t " style="left:134.0px;width:60px;top:631.41px;font-size:10.5px;line-height:10.5px;text-align:center;">351</div>
<div class="t " style="left:196.0px;width:60px;top:631.41px;font-size:10.5px;line-height:10.5px;text-align:center;">-293</div>
<div class="t " style="left:258.0px;width:60px;top:631.41px;font-size:10.5px;line-height:10.5px;text-align:center;">-790</div>
<div class="t " style="right:839.5px;top:631.16px;font-size:10.8px;line-height:10.8px;text-align:right;letter-spacing:0.4px">Delta</div>
<div class="t " style="left:10.0px;width:60px;top:643.51px;font-size:10.5px;line-height:10.5px;text-align:center;">7670</div>
<div class="t " style="left:72.0px;width:60px;top:643.51px;font-size:10.5px;line-height:10.5px;text-align:center;">3334</div>
<div class="t " style="left:134.0px;width:60px;top:643.51px;font-size:10.5px;line-height:10.5px;text-align:center;">2123</div>
<div class="t " style="left:196.0px;width:60px;top:643.51px;font-size:10.5px;line-height:10.5px;text-align:center;">2829</div>
<div class="t " style="left:258.0px;width:60px;top:643.51px;font-size:10.5px;line-height:10.5px;text-align:center;">11056</div>
<div class="t " style="right:839.5px;top:643.26px;font-size:10.8px;line-height:10.8px;text-align:right;letter-spacing:0.4px">Trades</div>
<div class="t " style="left:10.0px;width:60px;top:655.51px;font-size:10.5px;line-height:10.5px;text-align:center;">2639</div>
<div class="t " style="left:72.0px;width:60px;top:655.51px;font-size:10.5px;line-height:10.5px;text-align:center;">363</div>
<div class="t " style="left:134.0px;width:60px;top:655.51px;font-size:10.5px;line-height:10.5px;text-align:center;">451</div>
<div class="t " style="left:196.0px;width:60px;top:655.51px;font-size:10.5px;line-height:10.5px;text-align:center;">565</div>
<div class="t " style="left:258.0px;width:60px;top:655.51px;font-size:10.5px;line-height:10.5px;text-align:center;">2020</div>
<div class="t " style="right:839.5px;top:655.26px;font-size:10.8px;line-height:10.8px;text-align:right;letter-spacing:0.4px">Volume</div>
<div class="t " style="left:10.0px;width:60px;top:667.71px;font-size:10.5px;line-height:10.5px;text-align:center;">0</div>
<div class="t " style="left:72.0px;width:60px;top:667.71px;font-size:10.5px;line-height:10.5px;text-align:center;">0</div>
<div class="t " style="left:134.0px;width:60px;top:667.71px;font-size:10.5px;line-height:10.5px;text-align:center;">215</div>
<div class="t " style="left:196.0px;width:60px;top:667.71px;font-size:10.5px;line-height:10.5px;text-align:center;">-100</div>
<div class="t " style="left:258.0px;width:60px;top:667.71px;font-size:10.5px;line-height:10.5px;text-align:center;">50</div>
<div class="t " style="right:839.5px;top:667.46px;font-size:10.8px;line-height:10.8px;text-align:right;letter-spacing:0.4px">Finish</div>
<div style="left:7px;top:683px;width:405px;height:1px;background:#a0a0a0"></div>
<div style="left:412px;top:472px;width:1px;height:211px;background:#a0a0a0"></div>
<div style="left:40px;top:683px;width:1px;height:4px;background:#a0a0a0"></div>
<div class="t " style="left:10.0px;width:60px;top:689.49px;font-size:11px;line-height:11px;text-align:center;">2:31:24</div>
<div style="left:102px;top:683px;width:1px;height:4px;background:#a0a0a0"></div>
<div class="t " style="left:72.0px;width:60px;top:689.49px;font-size:11px;line-height:11px;text-align:center;">2:32:34</div>
<div style="left:164px;top:683px;width:1px;height:4px;background:#a0a0a0"></div>
<div class="t " style="left:134.0px;width:60px;top:689.49px;font-size:11px;line-height:11px;text-align:center;">2:34:08</div>
<div style="left:226px;top:683px;width:1px;height:4px;background:#a0a0a0"></div>
<div class="t " style="left:196.0px;width:60px;top:689.49px;font-size:11px;line-height:11px;text-align:center;">2:39:17</div>
<div style="left:288px;top:683px;width:1px;height:4px;background:#a0a0a0"></div>
<div class="t " style="left:258.0px;width:60px;top:689.49px;font-size:11px;line-height:11px;text-align:center;">2:42</div>
<div style="left:350px;top:683px;width:1px;height:4px;background:#a0a0a0"></div>
<div class="t " style="left:320.0px;width:60px;top:689.49px;font-size:11px;line-height:11px;text-align:center;">2:43:01</div>
<div style="left:442px;top:687px;width:19px;height:15px;background:#ff0000"></div>
<div class="t " style="left:436.5px;width:30px;top:689.49px;font-size:11px;line-height:11px;text-align:center;">61</div>
<div style="left:4px;top:703px;width:460px;height:30px;background:#f0f0f0"></div>
<div style="left:6px;top:707px;width:457px;height:2px;background:#6d6d6d"></div>
<div style="left:10px;top:710px;width:59px;height:20px;background:#f0f0f0;border-left:1px solid #a0a0a0;box-shadow:inset 1px 0 0 #fff;border-right:2px solid #6d6d6d;border-bottom:2px solid #6d6d6d;border-radius:0 0 3px 3px"></div>
<div class="t " style="left:14.3px;top:713.99px;font-size:11px;line-height:11px;letter-spacing:0.55px">Footprint</div>
<div style="left:70px;top:710px;width:87px;height:20px;background:#f0f0f0;border-left:1px solid #a0a0a0;box-shadow:inset 1px 0 0 #fff;border-right:2px solid #6d6d6d;border-bottom:2px solid #6d6d6d;border-radius:0 0 3px 3px"></div>
<div class="t " style="left:75.4px;top:713.99px;font-size:11px;line-height:11px;letter-spacing:0.15px">E-mini S/P 500</div>
<div style="left:158px;top:708px;width:83px;height:23px;background:#3399ff;border-bottom:2px solid #6d6d6d"></div>
<div class="t " style="left:164.3px;top:716.12px;font-size:11.2px;line-height:11.2px;color:#fff">Range Bar All</div>
<div style="left:241px;top:710px;width:87px;height:20px;background:#f0f0f0;border-left:1px solid #a0a0a0;box-shadow:inset 1px 0 0 #fff;border-right:2px solid #6d6d6d;border-bottom:2px solid #6d6d6d;border-radius:0 0 3px 3px"></div>
<div class="t " style="left:246.5px;top:713.99px;font-size:11px;line-height:11px;letter-spacing:0px">Range Bar &gt;24</div>
<div style="left:329px;top:710px;width:87px;height:20px;background:#f0f0f0;border-left:1px solid #a0a0a0;box-shadow:inset 1px 0 0 #fff;border-right:2px solid #6d6d6d;border-bottom:2px solid #6d6d6d;border-radius:0 0 3px 3px"></div>
<div class="t " style="left:334.6px;top:713.99px;font-size:11px;line-height:11px;letter-spacing:0px">Range Bar &gt;49</div>
<div style="left:4px;top:732px;width:460px;height:2px;background:#fff"></div>
<div style="left:0px;top:734px;width:468px;height:4px;background:#1a1a1a"></div>
<div style="left:15px;top:733px;width:24px;height:14px;border-radius:50%;background:radial-gradient(ellipse at 50% 30%,#e8eef5,#9fb2c8);border:1px solid #1a4a7a"></div>
<div style="left:462px;top:99px;width:2px;height:610px;background:#f4f4f4"></div>
<div style="left:464px;top:25px;width:4px;height:713px;background:linear-gradient(90deg,#3a3a3a,#585858 50%,#2a2a2a)"></div>
<svg style="left:0;top:0" width="1251" height="738" viewBox="0 0 1251 738">
<defs><filter id="sh" x="-50%" y="-50%" width="200%" height="200%"><feGaussianBlur stdDeviation="2.2"/></filter></defs>
<g transform="translate(4,5)" filter="url(#sh)" fill="#000" opacity="0.55">
<path d="M381.5 331.3 L397 316.2 L399.8 323.7 L443.4 307.9 L444.8 311.5 L401.3 327.6 L403.8 334.2 Z"/>
<path d="M250.1 398.6 L228.9 395.5 L231.2 402.9 L192.2 415.6 L193.3 419.4 L232.4 406.7 L234.6 413.8 Z"/>
</g>
<path d="M381.5 331.3 L397 316.2 L399.8 323.7 L443.4 307.9 L444.8 311.5 L401.3 327.6 L403.8 334.2 Z" fill="#ff0000"/>
<path d="M250.1 398.6 L228.9 395.5 L231.2 402.9 L192.2 415.6 L193.3 419.4 L232.4 406.7 L234.6 413.8 Z" fill="#ff0000"/>
</svg>
<div style="left:479px;top:79px;width:772px;height:619px;background:#6e6e6e;border-radius:4px 4px 0 0;border:1px solid #9a9a9a;border-bottom-color:#444"></div>
<div style="left:480px;top:80px;width:770px;height:22px;border-radius:3px 3px 0 0;background:linear-gradient(90deg,#8a8a8a 0,#7a7a7a 22%,#3a3a3a 32%,#2e2e2e 50%,#3a3a3a 62%,#333 75%,#6a6a6a 88%,#858585 100%);border-radius:5px 5px 0 0"></div>
<div style="left:480px;top:80px;width:300px;height:22px;overflow:hidden"><div style="left:0;top:1px;width:205px;height:20px;background:rgba(225,225,225,0.6);filter:blur(6px);border-radius:10px"></div></div>
<div class="t " style="left:482px;top:85.10px;font-size:11.7px;line-height:11.7px;color:#000">Study Settings: Numbers Bars (ID:3)</div>
<div style="left:1201px;top:79px;width:47px;height:19px;background:linear-gradient(#e0a090 0,#d08070 40%,#c0301a 50%,#c84028 75%,#e07050 100%);border:1px solid #5a1a10;border-top:none;border-radius:0 0 5px 5px"></div>
<svg style="left:1218px;top:81px" width="15" height="14" viewBox="0 0 15 14"><path d="M3 3 L12 11 M12 3 L3 11" stroke="#3a3a4a" stroke-width="5" stroke-linecap="square"/><path d="M3 3 L12 11 M12 3 L3 11" stroke="#f4f4f4" stroke-width="2.6" stroke-linecap="square"/></svg>
<div style="left:481px;top:101px;width:768px;height:1px;background:#2a2a2a"></div>
<div style="left:482px;top:102px;width:766px;height:593px;background:#f0f0f0"></div>
<div style="left:481px;top:102px;width:1px;height:594px;background:#555"></div>
<div style="left:1248px;top:102px;width:1px;height:594px;background:#555"></div>
<div style="left:481px;top:695px;width:768px;height:2px;background:#2a2a2a"></div>
<div style="left:497px;top:140px;width:737px;height:503px;border-left:1px solid #fff;border-top:1px solid #fff;border-right:2px solid #6d6d6d;border-bottom:2px solid #6d6d6d;box-shadow:inset -1px -1px 0 #a0a0a0"></div>
<div style="left:497px;top:118px;width:127px;height:24px;background:#f0f0f0;border-left:1px solid #fff;border-top:1px solid #fff;border-right:2px solid #6d6d6d;border-radius:2px 2px 0 0"></div>
<div class="t " style="left:504.4px;top:121.80px;font-size:13px;line-height:13px;">Settings and Inputs</div>
<div style="left:624px;top:120px;width:76px;height:20px;background:#f0f0f0;border-top:1px solid #fff;border-right:2px solid #6d6d6d;border-radius:2px 2px 0 0"></div>
<div class="t " style="left:628.3px;top:123.60px;font-size:13px;line-height:13px;">Subgraphs</div>
<div style="left:700px;top:120px;width:48px;height:20px;background:#f0f0f0;border-top:1px solid #fff;border-right:2px solid #6d6d6d;border-radius:2px 2px 0 0"></div>
<div class="t " style="left:706px;top:123.60px;font-size:13px;line-height:13px;">Alerts</div>
<div class="t " style="left:512.2px;top:178.99px;font-size:13.6px;line-height:13.6px;">Standard Precedence</div>
<div class="t " style="left:512.5px;top:207.49px;font-size:13.6px;line-height:13.6px;">Based On:</div>
<div style="left:512px;top:227px;width:207px;height:22px;background:#fff;border-left:2px solid #6d6d6d;border-top:2px solid #6d6d6d;border-right:1px solid #fff;border-bottom:1px solid #fff;box-shadow:inset -1px -1px 0 #e3e3e3, inset 1px 1px 0 #a0a0a0"></div>
<div style="left:701px;top:229px;width:15px;height:19px;background:#f0f0f0;border-left:1px solid #fff;border-top:1px solid #fff;border-right:2px solid #6d6d6d;border-bottom:2px solid #6d6d6d;box-shadow:inset -1px -1px 0 #a0a0a0;"></div>
<svg style="left:705px;top:236.0px" width="7" height="4" viewBox="0 0 7 4"><path d="M0 0 H7 L3.5 4 Z" fill="#000"/></svg>
<div class="t " style="left:516px;top:231.50px;font-size:13px;line-height:13px;">&lt;Main Price Graph&gt;</div>
<div class="t " style="left:512.5px;top:259.49px;font-size:13.6px;line-height:13.6px;">Short Name:</div>
<div style="left:512px;top:278px;width:207px;height:23px;background:#fff;border-left:2px solid #6d6d6d;border-top:2px solid #6d6d6d;border-right:1px solid #fff;border-bottom:1px solid #fff;box-shadow:inset -1px -1px 0 #e3e3e3, inset 1px 1px 0 #a0a0a0"></div>
<div class="t " style="left:512.5px;top:311.49px;font-size:13.6px;line-height:13.6px;">Chart Region:</div>
<div style="left:512px;top:331px;width:97px;height:22px;background:#fff;border-left:2px solid #6d6d6d;border-top:2px solid #6d6d6d;border-right:1px solid #fff;border-bottom:1px solid #fff;box-shadow:inset -1px -1px 0 #e3e3e3, inset 1px 1px 0 #a0a0a0"></div>
<div style="left:591px;top:333px;width:15px;height:19px;background:#f0f0f0;border-left:1px solid #fff;border-top:1px solid #fff;border-right:2px solid #6d6d6d;border-bottom:2px solid #6d6d6d;box-shadow:inset -1px -1px 0 #a0a0a0;"></div>
<svg style="left:595px;top:340.0px" width="7" height="4" viewBox="0 0 7 4"><path d="M0 0 H7 L3.5 4 Z" fill="#000"/></svg>
<div class="t " style="left:516px;top:335.50px;font-size:13px;line-height:13px;">1</div>
<div style="left:622px;top:326px;width:98px;height:28px;background:#f0f0f0;border-left:1px solid #fff;border-top:1px solid #fff;border-right:2px solid #6d6d6d;border-bottom:2px solid #6d6d6d;box-shadow:inset -1px -1px 0 #a0a0a0;"></div>
<div class="t " style="left:631.0px;width:80px;top:332.60px;font-size:13px;line-height:13px;text-align:center;">Scale</div>
<div class="t " style="left:512.5px;top:363.49px;font-size:13.6px;line-height:13.6px;">Value Format:</div>
<div style="left:512px;top:383px;width:168px;height:22px;background:#fff;border-left:2px solid #6d6d6d;border-top:2px solid #6d6d6d;border-right:1px solid #fff;border-bottom:1px solid #fff;box-shadow:inset -1px -1px 0 #e3e3e3, inset 1px 1px 0 #a0a0a0"></div>
<div style="left:662px;top:385px;width:15px;height:19px;background:#f0f0f0;border-left:1px solid #fff;border-top:1px solid #fff;border-right:2px solid #6d6d6d;border-bottom:2px solid #6d6d6d;box-shadow:inset -1px -1px 0 #a0a0a0;"></div>
<svg style="left:666px;top:392.0px" width="7" height="4" viewBox="0 0 7 4"><path d="M0 0 H7 L3.5 4 Z" fill="#000"/></svg>
<div class="t " style="left:516px;top:387.50px;font-size:13px;line-height:13px;">Inherited</div>
<div style="left:512px;top:421px;width:13px;height:13px;background:#fff;border-left:2px solid #6d6d6d;border-top:2px solid #6d6d6d;border-right:1px solid #fff;border-bottom:1px solid #fff;box-shadow:inset 1px 1px 0 #a0a0a0,inset -1px -1px 0 #e3e3e3"></div>
<div class="t " style="left:530.2px;top:420.49px;font-size:13.6px;line-height:13.6px;">Display As Main Price Graph</div>
<div style="left:512px;top:445px;width:13px;height:13px;background:#fff;border-left:2px solid #6d6d6d;border-top:2px solid #6d6d6d;border-right:1px solid #fff;border-bottom:1px solid #fff;box-shadow:inset 1px 1px 0 #a0a0a0,inset -1px -1px 0 #e3e3e3"></div>
<div class="t " style="left:530.2px;top:444.49px;font-size:13.6px;line-height:13.6px;">Hide Study</div>
<div style="left:512px;top:477px;width:13px;height:13px;background:#fff;border-left:2px solid #6d6d6d;border-top:2px solid #6d6d6d;border-right:1px solid #fff;border-bottom:1px solid #fff;box-shadow:inset 1px 1px 0 #a0a0a0,inset -1px -1px 0 #e3e3e3"></div>
<div class="t " style="left:530.2px;top:468.49px;font-size:13.6px;line-height:13.6px;">Draw Study Underneath</div>
<div class="t " style="left:530.2px;top:484.29px;font-size:13.6px;line-height:13.6px;">Main Price Graph</div>
<div style="left:512px;top:507px;width:13px;height:13px;background:#fff;border-left:2px solid #6d6d6d;border-top:2px solid #6d6d6d;border-right:1px solid #fff;border-bottom:1px solid #fff;box-shadow:inset 1px 1px 0 #a0a0a0,inset -1px -1px 0 #e3e3e3"></div>
<div class="t " style="left:530.2px;top:506.99px;font-size:13.6px;line-height:13.6px;">Protect with Password</div>
<div style="left:732px;top:156px;width:490px;height:400px;background:#fff;border-left:2px solid #6d6d6d;border-top:2px solid #6d6d6d;border-right:1px solid #fff;border-bottom:1px solid #fff;box-shadow:inset -1px -1px 0 #e3e3e3, inset 1px 1px 0 #a0a0a0"></div>
<div style="left:734px;top:158px;width:469px;height:19px;background:#f0f0f0;border-bottom:1px solid #a0a0a0"></div>
<div style="left:1012px;top:158px;width:1px;height:19px;background:#a0a0a0"></div>
<div style="left:1013px;top:158px;width:1px;height:19px;background:#fff"></div>
<div class="t " style="left:740.2px;top:161.80px;font-size:13px;line-height:13px;">Input Name</div>
<div class="t " style="left:1020.4px;top:161.80px;font-size:13px;line-height:13px;">Input Value</div>
<div style="left:734px;top:177px;width:469px;height:361px;overflow:hidden">
<div style="left:0px;top:19px;width:469px;height:1px;background:#f0f0f0"></div>
<div class="t " style="left:4.5px;top:4.54px;font-size:13.3px;line-height:13.3px;">Column 1 Numbers Bars Text</div>
<div class="t " style="left:286.4px;top:4.54px;font-size:13.3px;line-height:13.3px;">Bid Vol x Ask Vol</div>
<div style="left:0px;top:36px;width:469px;height:1px;background:#f0f0f0"></div>
<div class="t " style="left:4.5px;top:21.54px;font-size:13.3px;line-height:13.3px;">Column 1 Background Type</div>
<div class="t " style="left:286.4px;top:21.54px;font-size:13.3px;line-height:13.3px;">Background On Dominant Side</div>
<div style="left:0px;top:53px;width:469px;height:1px;background:#f0f0f0"></div>
<div class="t " style="left:4.5px;top:38.54px;font-size:13.3px;line-height:13.3px;">Column 1 Background Coloring Method</div>
<div class="t " style="left:286.4px;top:38.54px;font-size:13.3px;line-height:13.3px;">Dominant Side</div>
<div style="left:0px;top:70px;width:469px;height:1px;background:#f0f0f0"></div>
<div class="t " style="left:4.5px;top:55.54px;font-size:13.3px;line-height:13.3px;">Column 1 Text Coloring Method</div>
<div class="t " style="left:286.4px;top:55.54px;font-size:13.3px;line-height:13.3px;">None</div>
<div style="left:0px;top:87px;width:469px;height:1px;background:#f0f0f0"></div>
<div style="left:281px;top:71px;width:188px;height:16px;background:rgb(225,225,225)"></div>
<div class="t " style="left:4.5px;top:72.54px;font-size:13.3px;line-height:13.3px;">Column 1 Range 3 Up Color</div>
<div class="t " style="left:286.4px;top:72.54px;font-size:13.3px;line-height:13.3px;letter-spacing:-0.55px">R: 225, G: 225, B: 225</div>
<div style="left:0px;top:104px;width:469px;height:1px;background:#f0f0f0"></div>
<div style="left:281px;top:88px;width:188px;height:16px;background:rgb(205,205,205)"></div>
<div class="t " style="left:4.5px;top:89.54px;font-size:13.3px;line-height:13.3px;">Column 1 Range 2 Up Color</div>
<div class="t " style="left:286.4px;top:89.54px;font-size:13.3px;line-height:13.3px;letter-spacing:-0.55px">R: 205, G: 205, B: 205</div>
<div style="left:0px;top:121px;width:469px;height:1px;background:#f0f0f0"></div>
<div style="left:281px;top:105px;width:188px;height:16px;background:rgb(181,181,181)"></div>
<div class="t " style="left:4.5px;top:106.54px;font-size:13.3px;line-height:13.3px;">Column 1 Range 1 Up Color</div>
<div class="t " style="left:286.4px;top:106.54px;font-size:13.3px;line-height:13.3px;letter-spacing:-0.55px">R: 181, G: 181, B: 181</div>
<div style="left:0px;top:138px;width:469px;height:1px;background:#f0f0f0"></div>
<div style="left:281px;top:122px;width:188px;height:16px;background:rgb(160,160,160)"></div>
<div class="t " style="left:4.5px;top:123.54px;font-size:13.3px;line-height:13.3px;">Column 1 Range 0 Up Color</div>
<div class="t " style="left:286.4px;top:123.54px;font-size:13.3px;line-height:13.3px;letter-spacing:-0.55px">R: 160, G: 160, B: 160</div>
<div style="left:0px;top:155px;width:469px;height:1px;background:#f0f0f0"></div>
<div style="left:281px;top:139px;width:188px;height:16px;background:rgb(191,128,128)"></div>
<div class="t " style="left:4.5px;top:140.54px;font-size:13.3px;line-height:13.3px;">Column 1 Range 0 Down Color</div>
<div class="t " style="left:286.4px;top:140.54px;font-size:13.3px;line-height:13.3px;letter-spacing:-0.55px">R: 191, G: 128, B: 128</div>
<div style="left:0px;top:172px;width:469px;height:1px;background:#f0f0f0"></div>
<div style="left:281px;top:156px;width:188px;height:16px;background:rgb(207,158,158)"></div>
<div class="t " style="left:4.5px;top:157.54px;font-size:13.3px;line-height:13.3px;">Column 1 Range 1 Down Color</div>
<div class="t " style="left:286.4px;top:157.54px;font-size:13.3px;line-height:13.3px;letter-spacing:-0.55px">R: 207, G: 158, B: 158</div>
<div style="left:0px;top:189px;width:469px;height:1px;background:#f0f0f0"></div>
<div style="left:281px;top:173px;width:188px;height:16px;background:rgb(222,188,188)"></div>
<div class="t " style="left:4.5px;top:174.54px;font-size:13.3px;line-height:13.3px;">Column 1 Range 2 Down Color</div>
<div class="t " style="left:286.4px;top:174.54px;font-size:13.3px;line-height:13.3px;letter-spacing:-0.55px">R: 222, G: 188, B: 188</div>
<div style="left:0px;top:206px;width:469px;height:1px;background:#f0f0f0"></div>
<div style="left:281px;top:190px;width:188px;height:16px;background:rgb(236,217,217)"></div>
<div class="t " style="left:4.5px;top:191.54px;font-size:13.3px;line-height:13.3px;">Column 1 Range 3 Down Color</div>
<div class="t " style="left:286.4px;top:191.54px;font-size:13.3px;line-height:13.3px;letter-spacing:-0.55px">R: 236, G: 217, B: 217</div>
<div style="left:0px;top:223px;width:469px;height:1px;background:#f0f0f0"></div>
<div class="t " style="left:4.5px;top:208.54px;font-size:13.3px;line-height:13.3px;">Column 2 Numbers Bars Text</div>
<div class="t " style="left:286.4px;top:208.54px;font-size:13.3px;line-height:13.3px;">No Text</div>
<div style="left:0px;top:240px;width:469px;height:1px;background:#f0f0f0"></div>
<div class="t " style="left:4.5px;top:225.54px;font-size:13.3px;line-height:13.3px;">Column 2 Background Type</div>
<div class="t " style="left:286.4px;top:225.54px;font-size:13.3px;line-height:13.3px;">Full Background</div>
<div style="left:0px;top:257px;width:469px;height:1px;background:#f0f0f0"></div>
<div class="t " style="left:4.5px;top:242.54px;font-size:13.3px;line-height:13.3px;">Column 2 Background Coloring Method</div>
<div class="t " style="left:286.4px;top:242.54px;font-size:13.3px;line-height:13.3px;">None - Transparent</div>
<div style="left:0px;top:274px;width:469px;height:1px;background:#f0f0f0"></div>
<div class="t " style="left:4.5px;top:259.54px;font-size:13.3px;line-height:13.3px;">Column 2 Text Coloring Method</div>
<div class="t " style="left:286.4px;top:259.54px;font-size:13.3px;line-height:13.3px;">None</div>
<div style="left:0px;top:291px;width:469px;height:1px;background:#f0f0f0"></div>
<div style="left:281px;top:275px;width:188px;height:16px;background:rgb(0,255,0)"></div>
<div class="t " style="left:4.5px;top:276.54px;font-size:13.3px;line-height:13.3px;">Column 2 Range 3 Up Color</div>
<div class="t " style="left:286.4px;top:276.54px;font-size:13.3px;line-height:13.3px;letter-spacing:-0.55px">R: 0, G: 255, B: 0</div>
<div style="left:0px;top:308px;width:469px;height:1px;background:#f0f0f0"></div>
<div style="left:281px;top:292px;width:188px;height:16px;background:rgb(0,212,0)"></div>
<div class="t " style="left:4.5px;top:293.54px;font-size:13.3px;line-height:13.3px;">Column 2 Range 2 Up Color</div>
<div class="t " style="left:286.4px;top:293.54px;font-size:13.3px;line-height:13.3px;letter-spacing:-0.55px">R: 0, G: 212, B: 0</div>
<div style="left:0px;top:325px;width:469px;height:1px;background:#f0f0f0"></div>
<div style="left:281px;top:309px;width:188px;height:16px;background:rgb(0,170,0)"></div>
<div class="t " style="left:4.5px;top:310.54px;font-size:13.3px;line-height:13.3px;">Column 2 Range 1 Up Color</div>
<div class="t " style="left:286.4px;top:310.54px;font-size:13.3px;line-height:13.3px;letter-spacing:-0.55px">R: 0, G: 170, B: 0</div>
<div style="left:0px;top:342px;width:469px;height:1px;background:#f0f0f0"></div>
<div style="left:281px;top:326px;width:188px;height:16px;background:rgb(0,127,0)"></div>
<div class="t " style="left:4.5px;top:327.54px;font-size:13.3px;line-height:13.3px;">Column 2 Range 0 Up Color</div>
<div class="t " style="left:286.4px;top:327.54px;font-size:13.3px;line-height:13.3px;letter-spacing:-0.55px">R: 0, G: 127, B: 0</div>
<div style="left:0px;top:359px;width:469px;height:1px;background:#f0f0f0"></div>
<div style="left:281px;top:343px;width:188px;height:16px;background:rgb(127,0,0)"></div>
<div class="t " style="left:4.5px;top:344.54px;font-size:13.3px;line-height:13.3px;">Column 2 Range 0 Down Color</div>
<div class="t " style="left:286.4px;top:344.54px;font-size:13.3px;line-height:13.3px;letter-spacing:-0.55px">R: 127, G: 0, B: 0</div>
<div style="left:280px;top:0px;width:1px;height:361px;background:#f0f0f0"></div>
</div>
<div style="left:1203px;top:158px;width:17px;height:380px;background:#f0f0f0"></div>
<svg style="left:1208px;top:164px" width="9" height="5" viewBox="0 0 9 5"><path d="M0 5 L4.5 0 L9 5 Z" fill="#333"/></svg>
<svg style="left:1208px;top:527px" width="9" height="5" viewBox="0 0 9 5"><path d="M0 0 L4.5 5 L9 0 Z" fill="#555"/></svg>
<div style="left:1204.5px;top:176.5px;width:14px;height:89px;background:linear-gradient(90deg,#f2f2f2,#e2e2e2 50%,#cfcfcf);border:1px solid #a0a0a0;border-radius:2px"></div>
<div style="left:1208px;top:217px;width:7px;height:1px;background:#555"></div>
<div style="left:1208px;top:220px;width:7px;height:1px;background:#555"></div>
<div style="left:1208px;top:223px;width:7px;height:1px;background:#555"></div>
<div style="left:734px;top:538px;width:469px;height:16px;background:#f0f0f0"></div>
<svg style="left:739px;top:542px" width="5" height="9" viewBox="0 0 5 9"><path d="M5 0 L0 4.5 L5 9 Z" fill="#555"/></svg>
<svg style="left:1192px;top:542px" width="5" height="9" viewBox="0 0 5 9"><path d="M0 0 L5 4.5 L0 9 Z" fill="#333"/></svg>
<div style="left:752px;top:539.5px;width:422px;height:14px;background:linear-gradient(#f2f2f2,#e2e2e2 50%,#cfcfcf);border:1px solid #a0a0a0;border-radius:2px"></div>
<div style="left:960px;top:543px;width:1px;height:7px;background:#555"></div>
<div style="left:963px;top:543px;width:1px;height:7px;background:#555"></div>
<div style="left:966px;top:543px;width:1px;height:7px;background:#555"></div>
<div style="left:1203px;top:538px;width:17px;height:16px;background:#f0f0f0"></div>
<div style="left:732px;top:571px;width:489px;height:46px;border:1px solid #a0a0a0;box-shadow:1px 1px 0 #fff, inset 1px 1px 0 #fff"></div>
<div style="left:738px;top:562px;width:32px;height:14px;background:#f0f0f0"></div>
<div class="t " style="left:741.5px;top:563.80px;font-size:13px;line-height:13px;">Input</div>
<div class="t " style="left:742.4px;top:583.46px;font-size:13.4px;line-height:13.4px;">Select an input in the list above</div>
<div style="left:496px;top:653px;width:100px;height:28px;background:#f0f0f0;border-left:1px solid #fff;border-top:1px solid #fff;border-right:2px solid #6d6d6d;border-bottom:2px solid #6d6d6d;box-shadow:inset -1px -1px 0 #a0a0a0;outline:1px solid #333;outline-offset:-1px"></div>
<div class="t " style="left:486.0px;width:120px;top:659.80px;font-size:13px;line-height:13px;text-align:center;">OK</div>
<div style="left:600px;top:653px;width:100px;height:28px;background:#f0f0f0;border-left:1px solid #fff;border-top:1px solid #fff;border-right:2px solid #6d6d6d;border-bottom:2px solid #6d6d6d;box-shadow:inset -1px -1px 0 #a0a0a0;"></div>
<div class="t " style="left:590.0px;width:120px;top:659.80px;font-size:13px;line-height:13px;text-align:center;">Cancel</div>
<div style="left:704px;top:653px;width:100px;height:28px;background:#f0f0f0;border-left:1px solid #fff;border-top:1px solid #fff;border-right:2px solid #6d6d6d;border-bottom:2px solid #6d6d6d;box-shadow:inset -1px -1px 0 #a0a0a0;"></div>
<div class="t " style="left:694.0px;width:120px;top:659.80px;font-size:13px;line-height:13px;text-align:center;">Apply</div>
<div style="left:808px;top:653px;width:100px;height:28px;background:#f0f0f0;border-left:1px solid #fff;border-top:1px solid #fff;border-right:2px solid #6d6d6d;border-bottom:2px solid #6d6d6d;box-shadow:inset -1px -1px 0 #a0a0a0;"></div>
<div class="t " style="left:798.0px;width:120px;top:659.80px;font-size:13px;line-height:13px;text-align:center;">Help</div>
<div style="left:912px;top:653px;width:108px;height:28px;background:#f0f0f0;border-left:1px solid #fff;border-top:1px solid #fff;border-right:2px solid #6d6d6d;border-bottom:2px solid #6d6d6d;box-shadow:inset -1px -1px 0 #a0a0a0;"></div>
<div class="t " style="left:906.0px;width:120px;top:659.80px;font-size:13px;line-height:13px;text-align:center;">Reset Defaults</div>
<div style="left:1028px;top:659px;width:13px;height:13px;background:#fff;border-left:2px solid #6d6d6d;border-top:2px solid #6d6d6d;border-right:1px solid #fff;border-bottom:1px solid #fff;box-shadow:inset 1px 1px 0 #a0a0a0,inset -1px -1px 0 #e3e3e3"></div>
<div class="t " style="left:1046.7px;top:651.66px;font-size:13.4px;line-height:13.4px;">Save these settings</div>
<div class="t " style="left:1046.7px;top:667.46px;font-size:13.4px;line-height:13.4px;">as the default</div>
</body></html>
